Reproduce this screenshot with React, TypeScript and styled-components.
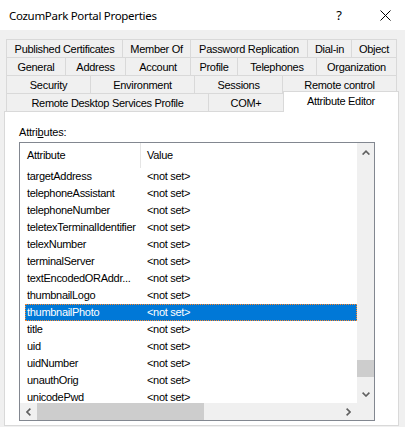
import React from "react";
import styled, { createGlobalStyle } from "styled-components";

const GlobalStyle = createGlobalStyle`
  html, body {
    margin: 0;
    padding: 0;
    background: #f0f0f0;
  }
  body {
    overflow: hidden;
  }
`;

const Window = styled.div`
  width: 405px;
  height: 427px;
  display: flex;
  flex-direction: column;
  background: #f0f0f0;
  overflow: hidden;
  font-family: "Liberation Sans", Arial, sans-serif;
  font-size: 11px;
  color: #000;
`;

const TitleBar = styled.div`
  flex: none;
  height: 30px;
  display: flex;
  align-items: center;
  background: #fff;
  padding-left: 9px;
  margin-right: -3px;
`;

const Title = styled.div`
  flex: 1;
  font-family: "Noto Sans", sans-serif;
  font-size: 11.5px;
  letter-spacing: -0.3px;
`;

const CaptionButton = styled.div`
  width: 46px;
  height: 30px;
  display: flex;
  align-items: center;
  justify-content: center;
  font-family: "Noto Sans", sans-serif;
  font-size: 13px;
`;

const Body = styled.div`
  flex: 1;
  min-height: 0;
  display: flex;
  flex-direction: column;
  padding: 9px 6px 1px 4px;
`;

const TabStrip = styled.div`
  margin: 0 2px;
  display: flex;
  flex-direction: column;
`;

const TabRow = styled.div`
  display: flex;
  height: 18px;
`;

const Tab = styled.div<{ $w?: number; $active?: boolean }>`
  box-sizing: border-box;
  flex: ${(p) => (p.$w ? `0 0 ${p.$w}px` : "1 1 0")};
  display: flex;
  align-items: center;
  justify-content: center;
  border: 1px solid #d9d9d9;
  border-bottom: none;
  background: ${(p) => (p.$active ? "#fff" : "#f0f0f0")};
  white-space: nowrap;
  letter-spacing: -0.3px;

  & + & {
    margin-left: -1px;
  }

  ${(p) =>
    p.$active &&
    `
    position: relative;
    z-index: 1;
    margin: -2px -2px -1px -1px;
    padding-bottom: 2px;
  `}
`;

const Panel = styled.div`
  flex: 1;
  display: flex;
  flex-direction: column;
  background: #fff;
  border: 1px solid #d9d9d9;
  padding: 13px 14px 0;
`;

const Label = styled.div`
  line-height: 14px;
  margin-bottom: 3px;
  letter-spacing: -0.2px;
`;

const ListBox = styled.div`
  box-sizing: border-box;
  width: 356px;
  height: 279px;
  border: 1px solid #828790;
  background: #fff;
  display: grid;
  grid-template-columns: 1fr 17px;
  grid-template-rows: 1fr 17px;
`;

const ListContent = styled.div`
  overflow: hidden;
  letter-spacing: -0.3px;
`;

const Header = styled.div`
  display: flex;
  height: 25px;
  line-height: 24px;
`;

const HeaderCell = styled.div<{ $w?: number }>`
  box-sizing: border-box;
  ${(p) => (p.$w ? `width: ${p.$w}px; border-right: 1px solid #e5e5e5;` : "flex: 1;")}
  padding-left: ${(p) => (p.$w ? 7 : 6)}px;
`;

const Row = styled.div<{ $selected?: boolean }>`
  display: flex;
  height: 17px;
  line-height: 17px;
  margin-left: 5px;
  white-space: nowrap;
  ${(p) =>
    p.$selected &&
    `
    background: #0078d7;
    color: #fff;
    outline: 1px dotted #ff8728;
    outline-offset: -1px;
  `}
`;

const NameCell = styled.div`
  box-sizing: border-box;
  width: 122px;
  padding-left: 2px;
  overflow: hidden;
`;

const ValueCell = styled.div`
  flex: 1;
`;

const ScrollBar = styled.div<{ $horizontal?: boolean }>`
  display: flex;
  flex-direction: ${(p) => (p.$horizontal ? "row" : "column")};
  background: #f0f0f0;
`;

const ArrowButton = styled.div<{ $nudge?: number }>`
  flex: 0 0 17px;
  display: flex;
  align-items: center;
  justify-content: center;
  padding-top: ${(p) => p.$nudge ?? 0}px;
  box-sizing: border-box;
`;

const Track = styled.div<{ $horizontal?: boolean }>`
  flex: 1;
  display: flex;
  flex-direction: ${(p) => (p.$horizontal ? "row" : "column")};
`;

const Thumb = styled.div<{ $horizontal?: boolean }>`
  flex: none;
  background: #cdcdcd;
  ${(p) => (p.$horizontal ? "height: 100%;" : "width: 100%; height: 17px;")}
`;

const Corner = styled.div`
  background: #f0f0f0;
`;

const tabRows: { label: string; w?: number; active?: boolean }[][] = [
  [
    { label: "Published Certificates", w: 117 },
    { label: "Member Of", w: 69 },
    { label: "Password Replication", w: 118 },
    { label: "Dial-in", w: 45 },
    { label: "Object" },
  ],
  [
    { label: "General", w: 60 },
    { label: "Address", w: 61 },
    { label: "Account", w: 66 },
    { label: "Profile", w: 48 },
    { label: "Telephones", w: 80 },
    { label: "Organization" },
  ],
  [
    { label: "Security", w: 85 },
    { label: "Environment", w: 105 },
    { label: "Sessions", w: 89 },
    { label: "Remote control" },
  ],
  [
    { label: "Remote Desktop Services Profile", w: 203 },
    { label: "COM+", w: 76 },
    { label: "Attribute Editor", active: true },
  ],
];

const attributes = [
  "targetAddress",
  "telephoneAssistant",
  "telephoneNumber",
  "teletexTerminalIdentifier",
  "telexNumber",
  "terminalServer",
  "textEncodedORAddr...",
  "thumbnailLogo",
  "thumbnailPhoto",
  "title",
  "uid",
  "uidNumber",
  "unauthOrig",
  "unicodePwd",
];

const selectedAttr = "thumbnailPhoto";

const Chevron = ({ dir }: { dir: "up" | "down" | "left" | "right" }) => {
  const vertical = dir === "up" || dir === "down";
  const d = {
    up: "M0.6 4.6 L4 1.2 L7.4 4.6",
    down: "M0.6 0.6 L4 4 L7.4 0.6",
    left: "M4.4 0.6 L1 4 L4.4 7.4",
    right: "M0.6 0.6 L4 4 L0.6 7.4",
  }[dir];
  return (
    <svg
      width={vertical ? 8 : 5}
      height={vertical ? 5 : 8}
      viewBox={vertical ? "0 0 8 5" : "0 0 5 8"}
    >
      <path d={d} stroke="#606060" strokeWidth="1.6" fill="none" />
    </svg>
  );
};

const App = () => {
  return (
    <Window>
      <GlobalStyle />
      <TitleBar>
        <Title>CozumPark Portal Properties</Title>
        <CaptionButton>?</CaptionButton>
        <CaptionButton>
          <svg width="11" height="11" viewBox="0 0 11 11">
            <path d="M0.5 0.5 L10.5 10.5 M10.5 0.5 L0.5 10.5" stroke="#000" strokeWidth="1" />
          </svg>
        </CaptionButton>
      </TitleBar>
      <Body>
        <TabStrip>
          {tabRows.map((row, i) => (
            <TabRow key={i}>
              {row.map((t) => (
                <Tab key={t.label} $w={t.w} $active={t.active}>
                  {t.label}
                </Tab>
              ))}
            </TabRow>
          ))}
        </TabStrip>
        <Panel>
          <Label>
            Attri<u>b</u>utes:
          </Label>
          <ListBox>
            <ListContent>
              <Header>
                <HeaderCell $w={121}>Attribute</HeaderCell>
                <HeaderCell>Value</HeaderCell>
              </Header>
              {attributes.map((a) => (
                <Row key={a} $selected={a === selectedAttr}>
                  <NameCell>{a}</NameCell>
                  <ValueCell>&lt;not set&gt;</ValueCell>
                </Row>
              ))}
            </ListContent>
            <ScrollBar>
              <ArrowButton $nudge={2}>
                <Chevron dir="up" />
              </ArrowButton>
              <Track>
                <Thumb style={{ marginTop: 200 }} />
              </Track>
              <ArrowButton>
                <Chevron dir="down" />
              </ArrowButton>
            </ScrollBar>
            <ScrollBar $horizontal>
              <ArrowButton>
                <Chevron dir="left" />
              </ArrowButton>
              <Track $horizontal>
                <Thumb $horizontal style={{ width: 167 }} />
              </Track>
              <ArrowButton>
                <Chevron dir="right" />
              </ArrowButton>
            </ScrollBar>
            <Corner />
          </ListBox>
        </Panel>
      </Body>
    </Window>
  );
};

export default App;
